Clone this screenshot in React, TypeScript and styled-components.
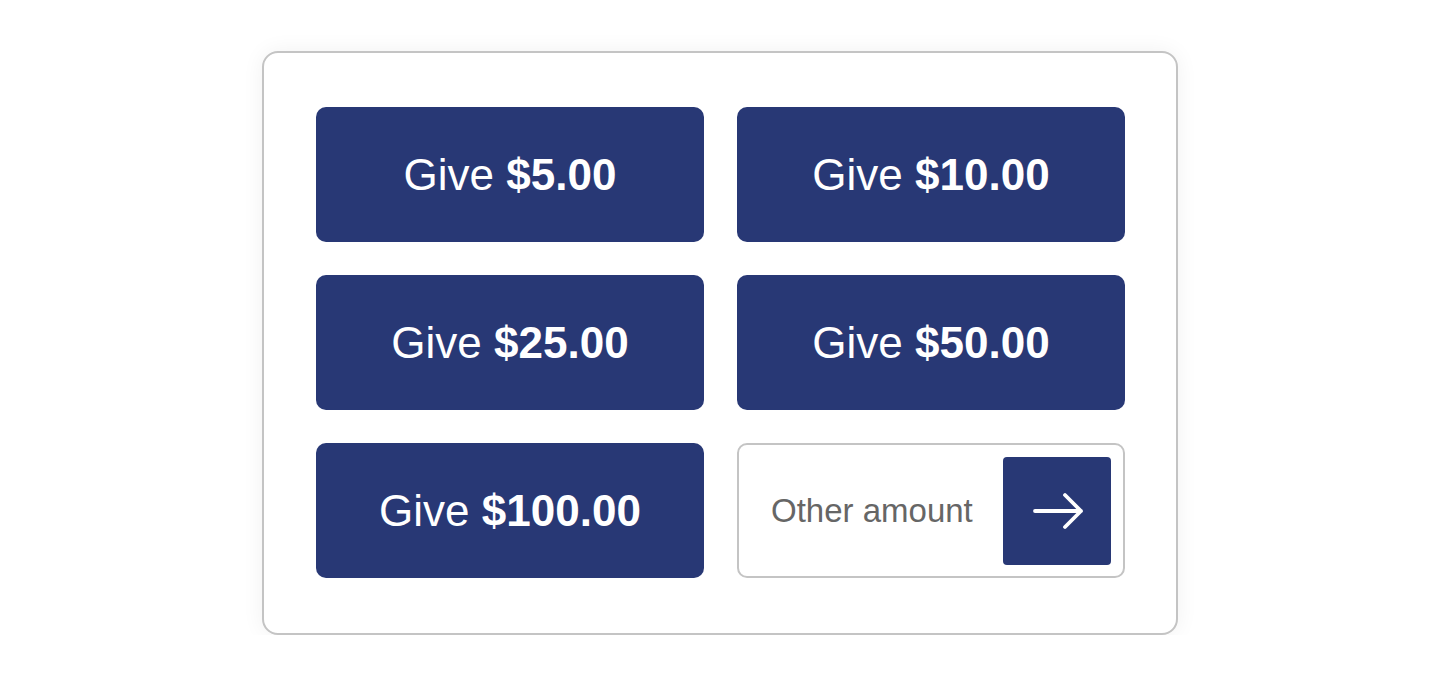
import React from "react";
import styled, { createGlobalStyle } from "styled-components";

const GlobalStyle = createGlobalStyle`
  body {
    margin: 0;
    background: #ffffff;
    font-family: "Liberation Sans", Arial, sans-serif;
  }
`;

const amounts = ["5.00", "10.00", "25.00", "50.00", "100.00"];

const App: React.FC = () => {
  return (
    <>
      <GlobalStyle />
      <Page>
        <Card>
          <Grid>
            {amounts.map((amount) => (
              <GiveButton key={amount}>
                Give&nbsp;<Amount>${amount}</Amount>
              </GiveButton>
            ))}
            <OtherBox>
              <OtherInput placeholder="Other amount" />
              <SubmitButton aria-label="Submit">
                <svg width="56" height="38" viewBox="0 0 56 38" fill="none">
                  <path
                    d="M6 19 H52 M36 3 L52 19 L36 35"
                    stroke="#fff"
                    strokeWidth="3.8"
                    strokeLinecap="round"
                    strokeLinejoin="round"
                  />
                </svg>
              </SubmitButton>
            </OtherBox>
          </Grid>
        </Card>
      </Page>
    </>
  );
};

export default App;

const Page = styled.div`
  display: flex;
  justify-content: center;
  padding-top: 51px;
`;

const Card = styled.div`
  width: 916px;
  box-sizing: border-box;
  padding: 54px 51px 55px 52px;
  border: 2px solid #c4c4c4;
  border-radius: 16px;
  background: #fff;
  box-shadow: 0 0 22px rgba(0, 0, 0, 0.06);
`;

const Grid = styled.div`
  display: grid;
  grid-template-columns: 388px 388px;
  grid-auto-rows: 135px;
  gap: 33px;
`;

const GiveButton = styled.button`
  display: flex;
  align-items: center;
  justify-content: center;
  border: none;
  border-radius: 10px;
  background: #283875;
  color: #fff;
  font-family: "Liberation Sans", Arial, sans-serif;
  font-size: 44px;
  cursor: pointer;
  padding: 0;
`;

const Amount = styled.strong`
  font-weight: 700;
`;

const OtherBox = styled.div`
  display: flex;
  align-items: center;
  box-sizing: border-box;
  border: 2px solid #c4c4c4;
  border-radius: 10px;
  padding: 12px 12px 12px 32px;
  background: #fff;
`;

const OtherInput = styled.input`
  flex: 1;
  min-width: 0;
  border: none;
  outline: none;
  background: transparent;
  padding: 0;
  font-family: "Liberation Sans", Arial, sans-serif;
  font-size: 33px;
  color: #666;

  &::placeholder {
    color: #666;
    opacity: 1;
  }
`;

const SubmitButton = styled.button`
  width: 108px;
  height: 108px;
  flex-shrink: 0;
  display: flex;
  align-items: center;
  justify-content: center;
  border: none;
  border-radius: 4px;
  background: #283875;
  cursor: pointer;
  padding: 0;
`;
